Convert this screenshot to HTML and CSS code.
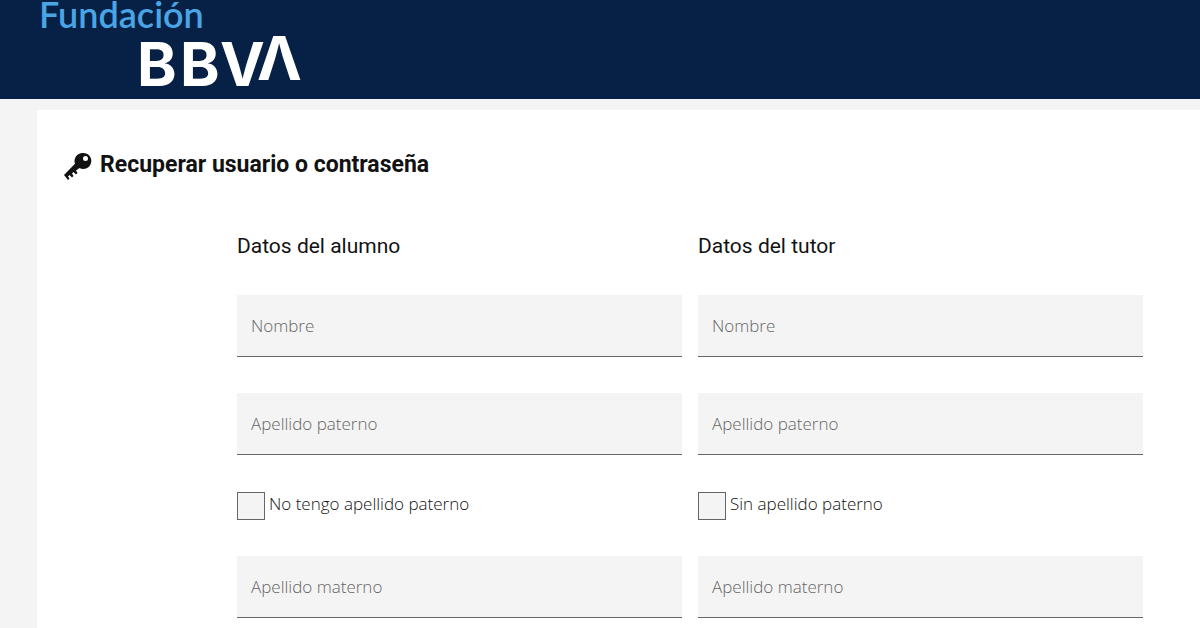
FILE: index.html
```html
<!DOCTYPE html>
<html lang="es">
<head>
    <meta charset="UTF-8">
    <meta name="viewport" content="width=device-width, initial-scale=1.0">
    <title>Recuperar usuario o contraseña</title>
    <link rel="stylesheet" href="styles.css">
</head>
<body>
    <header class="header">
        <svg class="logo" width="270" height="99" viewBox="0 0 270 99" role="img" aria-label="Fundación BBVA">
            <text class="logo-top" x="-1" y="28">Fundación</text>
            <text class="logo-bottom" y="86"><tspan x="97 140 180">BBV</tspan><tspan x="217" dy="-6">Λ</tspan></text>
        </svg>
    </header>

    <main class="panel">
        <h1 class="title">
            <svg class="key" width="28" height="32" viewBox="0 0 28 32" aria-hidden="true">
                <path fill-rule="evenodd" d="M18.500 4a8 8 0 0 0-7.500 10.800L0 26l4 5 1.500-1.500-1.500-2 1.500-1.500 2.500 2.500 1.500-1.500-1.500-2.500 1.500-1.500 2.500 2.500 1.500-1.500-1.500-2.500 3.500-2.500A8 8 0 1 0 18.500 4zM21.500 7a2.500 2.500 0 1 1 0 5 2.500 2.500 0 0 1 0-5z"/>
            </svg>
            Recuperar usuario o contraseña
        </h1>

        <form class="form">
            <section class="column">
                <h2 class="subtitle">Datos del alumno</h2>
                <input class="field" type="text" placeholder="Nombre" aria-label="Nombre del alumno">
                <input class="field" type="text" placeholder="Apellido paterno" aria-label="Apellido paterno del alumno">
                <div class="check">
                    <input class="check-box" type="checkbox" id="alumno-sin-paterno">
                    <label for="alumno-sin-paterno">No tengo apellido paterno</label>
                </div>
                <input class="field" type="text" placeholder="Apellido materno" aria-label="Apellido materno del alumno">
            </section>

            <section class="column">
                <h2 class="subtitle">Datos del tutor</h2>
                <input class="field" type="text" placeholder="Nombre" aria-label="Nombre del tutor">
                <input class="field" type="text" placeholder="Apellido paterno" aria-label="Apellido paterno del tutor">
                <div class="check">
                    <input class="check-box" type="checkbox" id="tutor-sin-paterno">
                    <label for="tutor-sin-paterno">Sin apellido paterno</label>
                </div>
                <input class="field" type="text" placeholder="Apellido materno" aria-label="Apellido materno del tutor">
            </section>
        </form>
    </main>
</body>
</html>
```

FILE: styles.css
```css
* {
    box-sizing: border-box;
}
body {
    margin: 0;
    background-color: #f4f4f4;
    color: #121212;
    font-family: "Open Sans", "Noto Sans", sans-serif;
}

/* Header */
.header {
    background-color: #072146;
    padding-left: 40px;
}
.logo {
    display: block;
    overflow: visible;
}
.logo-top {
    fill: #49a5e6;
    font-family: Lato, sans-serif;
    font-size: 36px;
    font-weight: 600;
}
.logo-bottom {
    fill: #fff;
    font-family: Inter, sans-serif;
    font-size: 60px;
    font-weight: 700;
}

/* Content */
.panel {
    margin: 11px 0 0 37px;
    padding: 38px 57px 20px 27px;
    background-color: #fff;
}
.title {
    display: flex;
    align-items: center;
    gap: 8px;
    margin: 0;
    font-family: Roboto, sans-serif;
    font-size: 23px;
    line-height: 34px;
    font-weight: 700;
}
.key {
    fill: #121212;
}
.form {
    display: flex;
    gap: 16px;
    margin: 51px 0 0 173px;
}
.column {
    flex: 1;
    display: flex;
    flex-direction: column;
    gap: 36px;
}
.subtitle {
    margin: 0;
    font-family: Roboto, sans-serif;
    font-size: 21px;
    line-height: 26px;
    font-weight: 400;
}
.field {
    width: 100%;
    height: 62px;
    padding: 0 14px;
    border: 0;
    border-bottom: 1px solid #666;
    border-radius: 0;
    background-color: #f4f4f4;
    color: #121212;
    font-family: inherit;
    font-size: 17px;
    font-weight: 300;
}
.field::placeholder {
    color: #666;
    opacity: 1;
}
.check {
    display: flex;
    gap: 4px;
    padding-top: 1px;
    font-size: 17px;
    line-height: 24px;
    font-weight: 300;
}
.check-box {
    appearance: none;
    width: 28px;
    height: 28px;
    margin: 0;
    border: 1px solid #666;
    background-color: #f4f4f4;
}
.check-box:checked {
    background-color: #1464a5;
}
```
